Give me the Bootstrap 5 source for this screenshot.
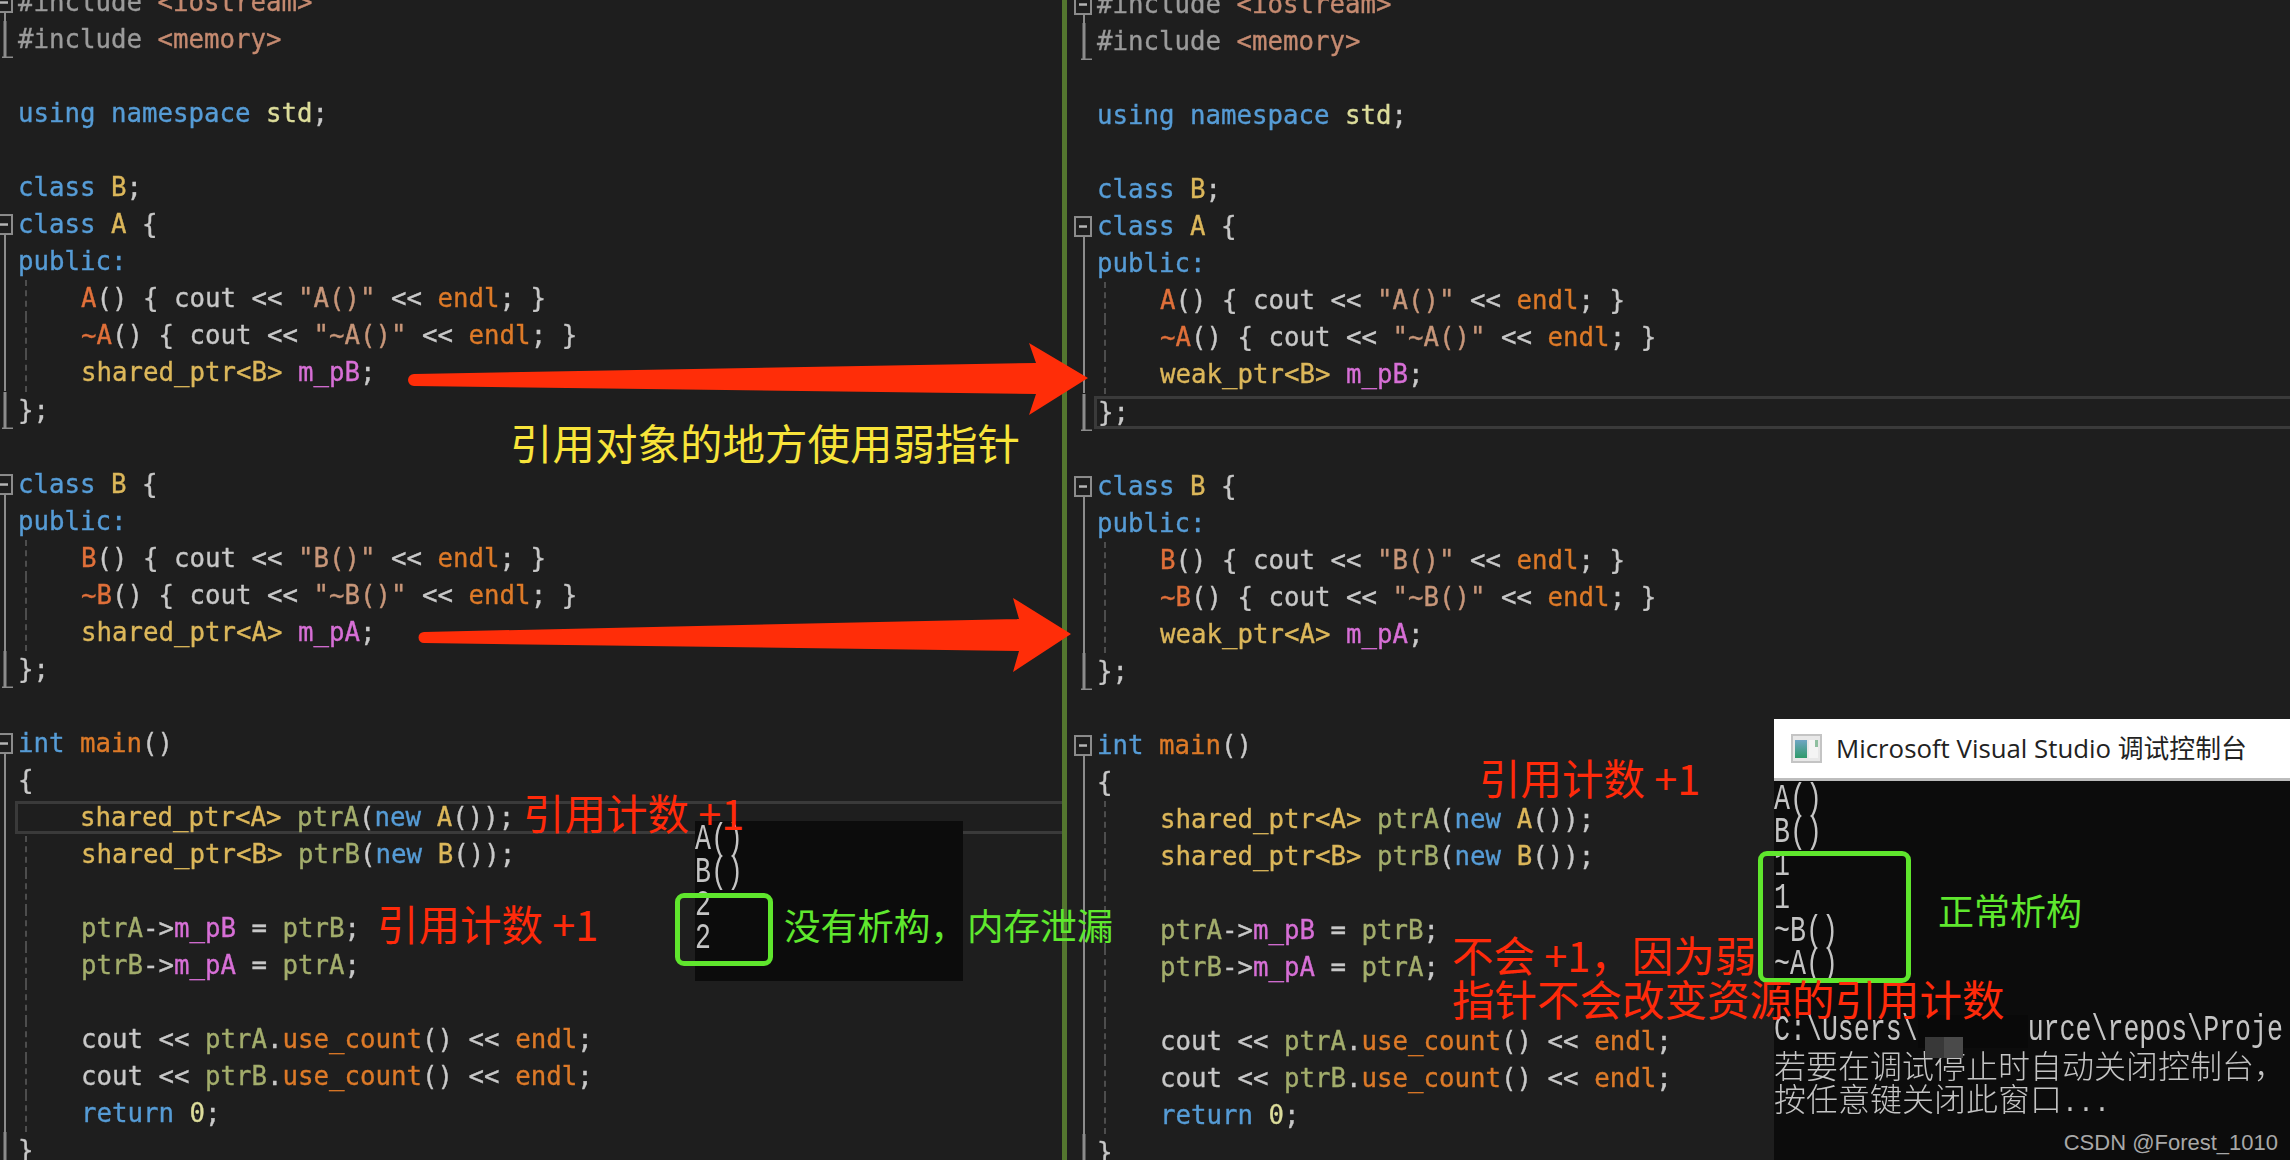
<!DOCTYPE html>
<html lang="zh">
<head>
<meta charset="utf-8">
<title>weak_ptr</title>
<link href="https://cdn.jsdelivr.net/npm/bootstrap@5.3.0/dist/css/bootstrap.min.css" rel="stylesheet">
<style>
html,body{height:100%;margin:0;background:#1e1e1e;overflow:hidden}
.stage{width:2290px;height:1160px;overflow:hidden;background:#1e1e1e}
.pane{font-family:"DejaVu Sans Mono","Liberation Mono",monospace;font-size:25.75px;line-height:37.05px;color:#c8c8c8;filter:blur(.55px);-webkit-text-stroke:.35px currentColor}
.pane-l{width:1072px;margin-left:-5px;margin-top:-16px;border-right:5px solid #54772f;flex:none}
.pane-r{flex:1;padding-left:7px;margin-top:-14px}
.ln{height:37.05px;display:flex;white-space:pre}
.gut{width:23px;height:37.05px;flex:none;display:block}
.ind{margin-left:7px;padding-left:54px;border-left:2px dashed #4d4d4d}
.cur{flex:1;height:33px;margin:2px 0 0 -3px;border:3px solid #3a3a3a;border-right:0;line-height:27px;padding-left:1px}
.cur-i{flex:1;height:33px;margin:2px 0 0 -3px;border:3px solid #3a3a3a;border-right:0;line-height:27px;padding-left:62px}
.k{color:#569cd6}.t{color:#dcb75a}.f{color:#e0703a}.m{color:#d76fd6}.e{color:#dd7a28}.v{color:#a3ad6c}.p{color:#9b9b9b}.i{color:#c58a70}.n{color:#dcdc9a}.q{color:#c79679}
.note{position:absolute;font-family:"Noto Sans CJK SC",sans-serif;font-weight:400;line-height:1;white-space:nowrap}
.red{color:#ff2a0a;font-size:41.5px}
.red-lg{font-size:42.5px}
.grn{color:#5fe82e;font-size:36.6px}
.grn-sm{font-size:36px}
.yel{color:#f8e43a;font-size:42.500px}
.arrows{position:absolute;left:0;top:0;width:2290px;height:1160px;pointer-events:none}
.gbox{position:absolute;border:5px solid #5fe62d;border-radius:9px}
.con{background:#0c0c0c;color:#c4c4c4;font-family:"Liberation Mono",monospace;font-size:26.6px;filter:blur(.4px)}
.con-l{position:absolute;left:695px;top:821px;width:268px;height:160px;padding-top:3px;overflow:hidden}
.con-r{position:absolute;left:1774px;top:719px;right:0;bottom:0;overflow:hidden;filter:none}
.tl{height:33px;line-height:33px;white-space:pre;display:block}
.tall{display:inline-block;transform:scaleY(1.36);transform-origin:50% 55%}
.cj{font-family:"Noto Sans CJK SC",sans-serif;font-size:32px;font-weight:300;letter-spacing:0}
.dots{font-family:"Liberation Mono",monospace;font-size:26.6px}
.tbar{height:62px;background:#fff;border-bottom:3px solid #bdbdbd;color:#222;font-size:25.800px;padding-left:17px;gap:14px}
.tbar-t{font-family:"Open Sans","Noto Sans CJK SC",sans-serif}
.cbody{padding-top:3px;filter:blur(.4px)}
.hide{display:inline-block;width:110px;background:#090909;height:33px;vertical-align:top}
.smudge{position:absolute;left:151px;top:318px;width:38px;height:21px;background:linear-gradient(90deg,#383838 50%,#4a4a4a 50%)}
.mark-w{position:absolute;right:12px;bottom:4px;font-family:"Liberation Sans",sans-serif;font-size:22px;line-height:26px;color:#a8a8a8}
</style>
</head>
<body>
<svg width="0" height="0" class="position-absolute">
<symbol id="g-box" viewBox="0 0 23 37"><rect x="1" y="9" width="16" height="19" fill="none" stroke="#8c8c8c" stroke-width="2"/><path d="M5 18.5h8" stroke="#b5b5b5" stroke-width="2.5"/><path d="M10 29v8" stroke="#8c8c8c" stroke-width="2"/></symbol>
<symbol id="g-line" viewBox="0 0 23 37"><path d="M10 0v37" stroke="#8c8c8c" stroke-width="2"/></symbol>
<symbol id="g-end" viewBox="0 0 23 37"><path d="M10 0v37M7 37h11" stroke="#8c8c8c" stroke-width="3"/></symbol>
</svg>
<div class="stage position-relative d-flex">

<div class="pane pane-l">
<div class="ln"><svg class="gut"><use href="#g-box"/></svg><span><span class="p">#include </span><span class="i">&lt;iostream&gt;</span></span></div>
<div class="ln"><svg class="gut"><use href="#g-end"/></svg><span><span class="p">#include </span><span class="i">&lt;memory&gt;</span></span></div>
<div class="ln"><span class="gut"></span></div>
<div class="ln"><span class="gut"></span><span><span class="k">using namespace</span> <span class="n">std</span>;</span></div>
<div class="ln"><span class="gut"></span></div>
<div class="ln"><span class="gut"></span><span><span class="k">class</span> <span class="t">B</span>;</span></div>
<div class="ln"><svg class="gut"><use href="#g-box"/></svg><span><span class="k">class</span> <span class="t">A</span> {</span></div>
<div class="ln"><svg class="gut"><use href="#g-line"/></svg><span class="k">public:</span></div>
<div class="ln"><svg class="gut"><use href="#g-line"/></svg><span class="ind"><span class="f">A</span>() { cout &lt;&lt; <span class="q">"A()"</span> &lt;&lt; <span class="e">endl</span>; }</span></div>
<div class="ln"><svg class="gut"><use href="#g-line"/></svg><span class="ind"><span class="f">~A</span>() { cout &lt;&lt; <span class="q">"~A()"</span> &lt;&lt; <span class="e">endl</span>; }</span></div>
<div class="ln"><svg class="gut"><use href="#g-line"/></svg><span class="ind"><span class="t">shared_ptr&lt;B&gt;</span> <span class="m">m_pB</span>;</span></div>
<div class="ln"><svg class="gut"><use href="#g-end"/></svg><span>};</span></div>
<div class="ln"><span class="gut"></span></div>
<div class="ln"><svg class="gut"><use href="#g-box"/></svg><span><span class="k">class</span> <span class="t">B</span> {</span></div>
<div class="ln"><svg class="gut"><use href="#g-line"/></svg><span class="k">public:</span></div>
<div class="ln"><svg class="gut"><use href="#g-line"/></svg><span class="ind"><span class="f">B</span>() { cout &lt;&lt; <span class="q">"B()"</span> &lt;&lt; <span class="e">endl</span>; }</span></div>
<div class="ln"><svg class="gut"><use href="#g-line"/></svg><span class="ind"><span class="f">~B</span>() { cout &lt;&lt; <span class="q">"~B()"</span> &lt;&lt; <span class="e">endl</span>; }</span></div>
<div class="ln"><svg class="gut"><use href="#g-line"/></svg><span class="ind"><span class="t">shared_ptr&lt;A&gt;</span> <span class="m">m_pA</span>;</span></div>
<div class="ln"><svg class="gut"><use href="#g-end"/></svg><span>};</span></div>
<div class="ln"><span class="gut"></span></div>
<div class="ln"><svg class="gut"><use href="#g-box"/></svg><span><span class="k">int</span> <span class="e">main</span>()</span></div>
<div class="ln"><svg class="gut"><use href="#g-line"/></svg><span>{</span></div>
<div class="ln"><svg class="gut"><use href="#g-line"/></svg><span class="cur-i"><span class="t">shared_ptr&lt;A&gt;</span> <span class="v">ptrA</span>(<span class="k">new</span> <span class="t">A</span>());</span></div>
<div class="ln"><svg class="gut"><use href="#g-line"/></svg><span class="ind"><span class="t">shared_ptr&lt;B&gt;</span> <span class="v">ptrB</span>(<span class="k">new</span> <span class="t">B</span>());</span></div>
<div class="ln"><svg class="gut"><use href="#g-line"/></svg><span class="ind"></span></div>
<div class="ln"><svg class="gut"><use href="#g-line"/></svg><span class="ind"><span class="v">ptrA</span>-&gt;<span class="m">m_pB</span> = <span class="v">ptrB</span>;</span></div>
<div class="ln"><svg class="gut"><use href="#g-line"/></svg><span class="ind"><span class="v">ptrB</span>-&gt;<span class="m">m_pA</span> = <span class="v">ptrA</span>;</span></div>
<div class="ln"><svg class="gut"><use href="#g-line"/></svg><span class="ind"></span></div>
<div class="ln"><svg class="gut"><use href="#g-line"/></svg><span class="ind">cout &lt;&lt; <span class="v">ptrA</span>.<span class="e">use_count</span>() &lt;&lt; <span class="e">endl</span>;</span></div>
<div class="ln"><svg class="gut"><use href="#g-line"/></svg><span class="ind">cout &lt;&lt; <span class="v">ptrB</span>.<span class="e">use_count</span>() &lt;&lt; <span class="e">endl</span>;</span></div>
<div class="ln"><svg class="gut"><use href="#g-line"/></svg><span class="ind"><span class="k">return</span> <span class="n">0</span>;</span></div>
<div class="ln"><svg class="gut"><use href="#g-end"/></svg><span>}</span></div>
</div>

<div class="pane pane-r">
<div class="ln"><svg class="gut"><use href="#g-box"/></svg><span><span class="p">#include </span><span class="i">&lt;iostream&gt;</span></span></div>
<div class="ln"><svg class="gut"><use href="#g-end"/></svg><span><span class="p">#include </span><span class="i">&lt;memory&gt;</span></span></div>
<div class="ln"><span class="gut"></span></div>
<div class="ln"><span class="gut"></span><span><span class="k">using namespace</span> <span class="n">std</span>;</span></div>
<div class="ln"><span class="gut"></span></div>
<div class="ln"><span class="gut"></span><span><span class="k">class</span> <span class="t">B</span>;</span></div>
<div class="ln"><svg class="gut"><use href="#g-box"/></svg><span><span class="k">class</span> <span class="t">A</span> {</span></div>
<div class="ln"><svg class="gut"><use href="#g-line"/></svg><span class="k">public:</span></div>
<div class="ln"><svg class="gut"><use href="#g-line"/></svg><span class="ind"><span class="f">A</span>() { cout &lt;&lt; <span class="q">"A()"</span> &lt;&lt; <span class="e">endl</span>; }</span></div>
<div class="ln"><svg class="gut"><use href="#g-line"/></svg><span class="ind"><span class="f">~A</span>() { cout &lt;&lt; <span class="q">"~A()"</span> &lt;&lt; <span class="e">endl</span>; }</span></div>
<div class="ln"><svg class="gut"><use href="#g-line"/></svg><span class="ind"><span class="t">weak_ptr&lt;B&gt;</span> <span class="m">m_pB</span>;</span></div>
<div class="ln"><svg class="gut"><use href="#g-end"/></svg><span class="cur">};</span></div>
<div class="ln"><span class="gut"></span></div>
<div class="ln"><svg class="gut"><use href="#g-box"/></svg><span><span class="k">class</span> <span class="t">B</span> {</span></div>
<div class="ln"><svg class="gut"><use href="#g-line"/></svg><span class="k">public:</span></div>
<div class="ln"><svg class="gut"><use href="#g-line"/></svg><span class="ind"><span class="f">B</span>() { cout &lt;&lt; <span class="q">"B()"</span> &lt;&lt; <span class="e">endl</span>; }</span></div>
<div class="ln"><svg class="gut"><use href="#g-line"/></svg><span class="ind"><span class="f">~B</span>() { cout &lt;&lt; <span class="q">"~B()"</span> &lt;&lt; <span class="e">endl</span>; }</span></div>
<div class="ln"><svg class="gut"><use href="#g-line"/></svg><span class="ind"><span class="t">weak_ptr&lt;A&gt;</span> <span class="m">m_pA</span>;</span></div>
<div class="ln"><svg class="gut"><use href="#g-end"/></svg><span>};</span></div>
<div class="ln"><span class="gut"></span></div>
<div class="ln"><svg class="gut"><use href="#g-box"/></svg><span><span class="k">int</span> <span class="e">main</span>()</span></div>
<div class="ln"><svg class="gut"><use href="#g-line"/></svg><span>{</span></div>
<div class="ln"><svg class="gut"><use href="#g-line"/></svg><span class="ind"><span class="t">shared_ptr&lt;A&gt;</span> <span class="v">ptrA</span>(<span class="k">new</span> <span class="t">A</span>());</span></div>
<div class="ln"><svg class="gut"><use href="#g-line"/></svg><span class="ind"><span class="t">shared_ptr&lt;B&gt;</span> <span class="v">ptrB</span>(<span class="k">new</span> <span class="t">B</span>());</span></div>
<div class="ln"><svg class="gut"><use href="#g-line"/></svg><span class="ind"></span></div>
<div class="ln"><svg class="gut"><use href="#g-line"/></svg><span class="ind"><span class="v">ptrA</span>-&gt;<span class="m">m_pB</span> = <span class="v">ptrB</span>;</span></div>
<div class="ln"><svg class="gut"><use href="#g-line"/></svg><span class="ind"><span class="v">ptrB</span>-&gt;<span class="m">m_pA</span> = <span class="v">ptrA</span>;</span></div>
<div class="ln"><svg class="gut"><use href="#g-line"/></svg><span class="ind"></span></div>
<div class="ln"><svg class="gut"><use href="#g-line"/></svg><span class="ind">cout &lt;&lt; <span class="v">ptrA</span>.<span class="e">use_count</span>() &lt;&lt; <span class="e">endl</span>;</span></div>
<div class="ln"><svg class="gut"><use href="#g-line"/></svg><span class="ind">cout &lt;&lt; <span class="v">ptrB</span>.<span class="e">use_count</span>() &lt;&lt; <span class="e">endl</span>;</span></div>
<div class="ln"><svg class="gut"><use href="#g-line"/></svg><span class="ind"><span class="k">return</span> <span class="n">0</span>;</span></div>
<div class="ln"><svg class="gut"><use href="#g-end"/></svg><span>}</span></div>
</div>

<svg class="arrows" viewBox="0 0 2290 1160">
<path fill="#ff2d08" d="M414 374L1036 363L1029 343L1088 378L1029 415L1036 394L414 386A6 6 0 0 1 414 374Z"/>
<path fill="#ff2d08" d="M424 632L1019 619L1013 598L1071 634L1013 672L1019 651L424 643A5.500 5.500 0 0 1 424 632Z"/>
</svg>

<div class="con con-l">
<span class="tl"><span class="tall">A()</span></span>
<span class="tl"><span class="tall">B()</span></span>
<span class="tl"><span class="tall">2</span></span>
<span class="tl"><span class="tall">2</span></span>
</div>

<div class="con con-r">
<div class="tbar d-flex align-items-center">
<svg width="31" height="29" viewBox="0 0 31 29"><defs><linearGradient id="ig" x1="0" y1="0" x2="0" y2="1"><stop offset="0" stop-color="#6fa5c4"/><stop offset="1" stop-color="#2f9a6a"/></linearGradient></defs><rect x="1" y="1" width="29" height="27" fill="#e8e8e8" stroke="#c4c4c4" stroke-width="2"/><rect x="4" y="6" width="12" height="18" fill="url(#ig)"/><rect x="18" y="6" width="9" height="18" fill="#f4f4f4"/><rect x="24" y="6" width="3" height="7" fill="#8fbfa0"/></svg>
<span class="tbar-t">Microsoft Visual Studio 调试控制台</span>
</div>
<div class="cbody">
<span class="tl"><span class="tall">A()</span></span>
<span class="tl"><span class="tall">B()</span></span>
<span class="tl"><span class="tall">1</span></span>
<span class="tl"><span class="tall">1</span></span>
<span class="tl"><span class="tall">~B()</span></span>
<span class="tl"><span class="tall">~A()</span></span>
<span class="tl"></span>
<span class="tl"><span class="tall">C:\Users\</span><span class="hide"></span><span class="tall">urce\repos\Proje</span></span>
<span class="tl cj">若要在调试停止时自动关闭控制台，</span>
<span class="tl cj">按任意键关闭此窗口<span class="dots">...</span></span>
</div>
<div class="smudge"></div>
<div class="mark-w">CSDN @Forest_1010</div>
</div>

<div class="gbox" style="left:675px;top:893px;width:98px;height:73px"></div>
<div class="gbox" style="left:1758px;top:851px;width:153px;height:132px"></div>

<div class="note yel" style="left:510px;top:421px">引用对象的地方使用弱指针</div>
<div class="note red" style="left:523px;top:792px">引用计数 +1</div>
<div class="note red" style="left:377px;top:903px">引用计数 +1</div>
<div class="note red" style="left:1479px;top:757px">引用计数 +1</div>
<div class="note red" style="left:1452px;top:934px">不会 +1，因为弱</div>
<div class="note red red-lg" style="left:1452px;top:977px">指针不会改变资源的引用计数</div>
<div class="note grn" style="left:784px;top:907px">没有析构，内存泄漏</div>
<div class="note grn grn-sm" style="left:1938px;top:891px">正常析构</div>

</div>
<script src="https://cdn.jsdelivr.net/npm/bootstrap@5.3.0/dist/js/bootstrap.bundle.min.js"></script>
</body>
</html>
